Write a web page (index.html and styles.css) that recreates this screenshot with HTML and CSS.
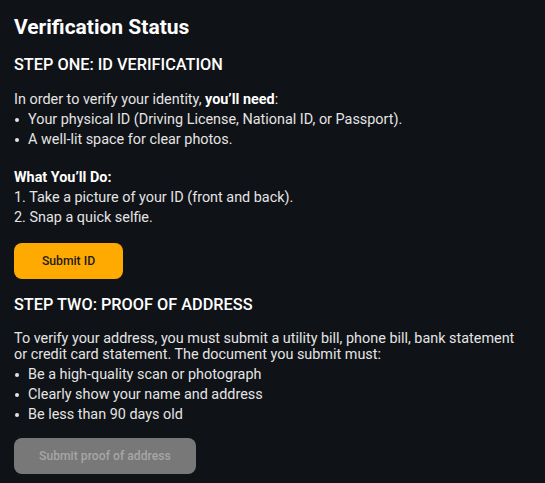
FILE: index.html
```html
<!DOCTYPE html>
<html lang="en">
<head>
<meta charset="utf-8">
<title>Verification Status</title>
<link rel="stylesheet" href="styles.css">
</head>
<body>
<main class="page">
  <h1 class="title">Verification Status</h1>

  <section class="step">
    <h2 class="step-title">STEP ONE: ID VERIFICATION</h2>
    <p class="lead">In order to verify your identity, <strong>you’ll need</strong>:</p>
    <ul class="bullets">
      <li>Your physical ID (Driving License, National ID, or Passport).</li>
      <li>A well-lit space for clear photos.</li>
    </ul>
    <h3 class="sub-title">What You’ll Do:</h3>
    <ol class="steps">
      <li>1. Take a picture of your ID (front and back).</li>
      <li>2. Snap a quick selfie.</li>
    </ol>
    <button class="btn btn-primary" type="button">Submit ID</button>
  </section>

  <section class="step">
    <h2 class="step-title step-title-two">STEP TWO: PROOF OF ADDRESS</h2>
    <p class="para">To verify your address, you must submit a utility bill, phone bill, bank statement or credit card statement. The document you submit must:</p>
    <ul class="bullets bullets-tight">
      <li>Be a high-quality scan or photograph</li>
      <li>Clearly show your name and address</li>
      <li>Be less than 90 days old</li>
    </ul>
    <button class="btn btn-disabled" type="button" disabled>Submit proof of address</button>
  </section>
</main>
</body>
</html>
```
FILE: styles.css
```css
html, body {
  margin: 0;
  padding: 0;
  background: #0f1216;
}

body {
  font-family: Roboto, "Noto Sans", sans-serif;
  color: #e4e4e4;
  font-size: 14.4px;
  line-height: 20px;
}

.page {
  padding: 15px 14px 0 14px;
  display: flex;
  flex-direction: column;
}

.title {
  margin: 0;
  font-size: 21px;
  line-height: 24px;
  font-weight: 700;
  color: #ffffff;
}

.step {
  display: flex;
  flex-direction: column;
  align-items: flex-start;
}

.step-title {
  margin: 16px 0 0 0;
  font-size: 16.3px;
  line-height: 20px;
  font-weight: 500;
  color: #ffffff;
}

.step-title-two {
  margin-top: 16px;
}

.lead {
  margin: 15px 0 0 0;
}

.lead strong {
  font-weight: 700;
  color: #ffffff;
}

.bullets {
  list-style: none;
  margin: 0;
  padding: 0;
}

.bullets li {
  display: flex;
  align-items: center;
}

.bullets li::before {
  content: "";
  flex: none;
  width: 4px;
  height: 4px;
  border-radius: 50%;
  background: currentColor;
  margin: 0 9px 0 1px;
}

.bullets-tight {
  margin-top: 2px;
}

.sub-title {
  margin: 18px 0 0 0;
  font-size: 14.4px;
  line-height: 20px;
  font-weight: 700;
  color: #ffffff;
}

.steps {
  list-style: none;
  margin: 0;
  padding: 0;
}

.para {
  margin: 16px 0 0 0;
  line-height: 16px;
  max-width: 510px;
}

.btn {
  height: 36px;
  min-width: 109px;
  padding: 0 25px;
  border: none;
  border-radius: 8px;
  font-family: Roboto, "Noto Sans", sans-serif;
  font-size: 12.2px;
  font-weight: 500;
  display: flex;
  align-items: center;
  justify-content: center;
}

.btn-primary {
  margin-top: 15px;
  background: #ffaa00;
  color: #1b1b1b;
}

.btn-disabled {
  margin-top: 13px;
  background: #787878;
  color: #a6a6a6;
}
```
